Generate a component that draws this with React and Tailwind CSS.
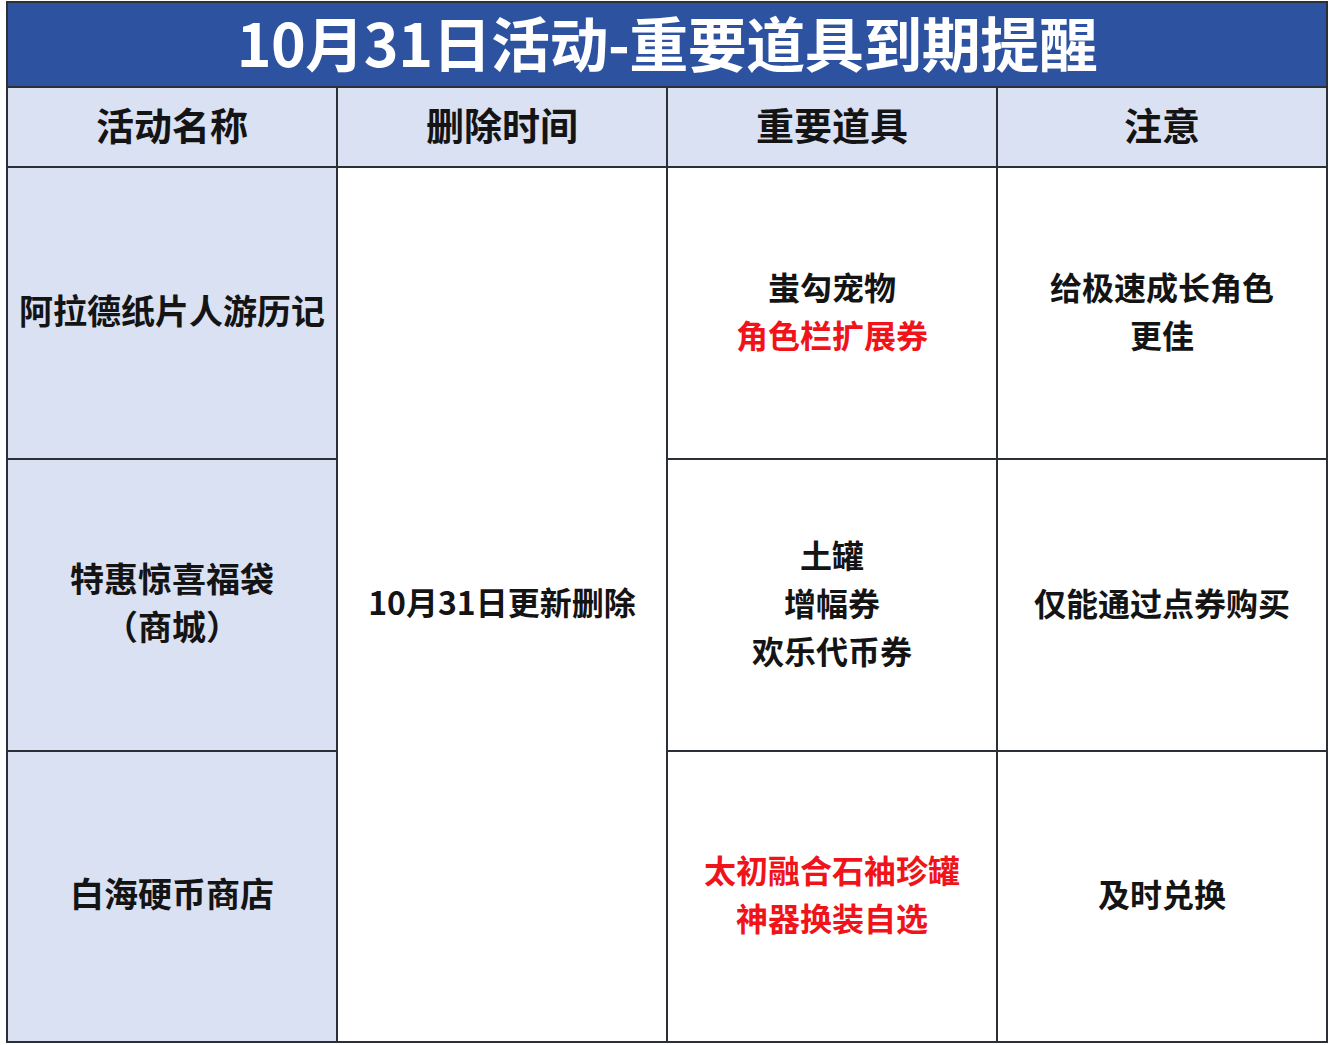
const rows = [
  {
    name: ['阿拉德纸片人游历记'],
    items: [
      { text: '蚩勾宠物', red: false },
      { text: '角色栏扩展券', red: true },
    ],
    note: ['给极速成长角色', '更佳'],
  },
  {
    name: ['特惠惊喜福袋', '（商城）'],
    items: [
      { text: '土罐', red: false },
      { text: '增幅券', red: false },
      { text: '欢乐代币券', red: false },
    ],
    note: ['仅能通过点券购买'],
  },
  {
    name: ['白海硬币商店'],
    items: [
      { text: '太初融合石袖珍罐', red: true },
      { text: '神器换装自选', red: true },
    ],
    note: ['及时兑换'],
  },
]

const font = { fontFamily: '"Noto Sans CJK SC", "Noto Sans", sans-serif' }

function Cell({ className = '', children }) {
  return (
    <div className={`flex flex-col items-center justify-center pb-[7px] text-center ${className}`}>
      {children}
    </div>
  )
}

export default function App() {
  return (
    <div className="min-h-[1045px] w-[1337px] bg-white pl-[6px] pt-[1px]" style={font}>
      <div className="grid w-[1322px] grid-cols-[328px_328px_328px_328px] grid-rows-[83px_78px_290px_290px_289px] gap-[2px] bg-[#2b2f36] p-[2px]">
        <Cell className="col-span-4 bg-[#2c52a0]">
          <span className="text-[59px] font-bold leading-none tracking-[-0.5px] text-white">
            10月31日活动-重要道具到期提醒
          </span>
        </Cell>

        {['活动名称', '删除时间', '重要道具', '注意'].map((h) => (
          <Cell key={h} className="bg-[#d9e1f2]">
            <span className="text-[38px] font-bold leading-none text-[#141414]">{h}</span>
          </Cell>
        ))}

        {rows.map((r, i) => (
          <div key={i} className="contents">
            <Cell className="bg-[#d9e1f2] text-[34px] font-bold leading-[48px] text-[#141414]">
              {r.name.map((t) => (
                <span key={t}>{t}</span>
              ))}
            </Cell>
            {i === 0 && (
              <Cell className="row-span-3 bg-white">
                <span className="text-[32px] font-bold leading-none text-[#141414]">10月31日更新删除</span>
              </Cell>
            )}
            <Cell className="bg-white text-[32px] font-bold leading-[48px]">
              {r.items.map((it) => (
                <span key={it.text} className={it.red ? 'text-[#f0141a]' : 'text-[#141414]'}>
                  {it.text}
                </span>
              ))}
            </Cell>
            <Cell className="bg-white text-[32px] font-bold leading-[48px] text-[#141414]">
              {r.note.map((t) => (
                <span key={t}>{t}</span>
              ))}
            </Cell>
          </div>
        ))}
      </div>
    </div>
  )
}
